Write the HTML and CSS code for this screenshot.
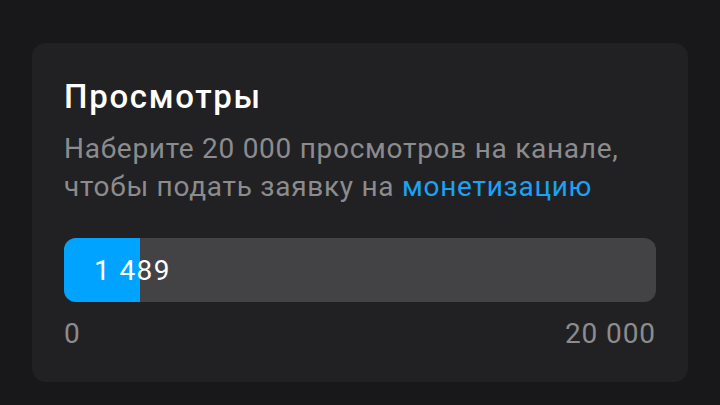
FILE: index.html
```html
<!DOCTYPE html>
<html lang="ru">
<head>
<meta charset="utf-8">
<link rel="stylesheet" href="styles.css">
</head>
<body>
<div class="page">
  <section class="card">
    <h1 class="title">Просмотры</h1>
    <p class="desc">Наберите 20 000 просмотров на канале,<br>чтобы подать заявку на <a class="link">монетизацию</a></p>
    <div class="bar">
      <div class="fill" style="width: 76px"></div>
      <span class="value">1 489</span>
    </div>
    <div class="scale"><span>0</span><span>20 000</span></div>
  </section>
</div>
</body>
</html>
```
FILE: styles.css
```css
html, body { margin: 0; padding: 0; }
body { background: #18181a; width: 720px; height: 405px; overflow: hidden; font-family: Roboto, "Noto Sans", sans-serif; }
.page { padding: 43px 32px 0 32px; }
.card { background: #212123; border-radius: 14px; padding: 34px 32px 0 32px; height: 339px; box-sizing: border-box; }
.title { margin: 0; color: #fff; font-weight: 500; font-size: 33px; line-height: 40px; letter-spacing: 1.7px; }
.desc { margin: 13px 0 0 0; color: #8c8c8e; font-size: 28px; line-height: 38px; letter-spacing: 0.72px; }
.link { color: #1aa3f5; }
.bar { position: relative; margin-top: 32px; height: 64px; background: #434345; border-radius: 12px; overflow: hidden; display: flex; align-items: center; }
.fill { position: absolute; left: 0; top: 0; bottom: 0; background: #00a3ff; }
.value { position: relative; margin-left: 30px; color: #fff; font-size: 28px; letter-spacing: 1.4px; }
.scale { display: flex; justify-content: space-between; margin-top: 13px; color: #8c8c8e; font-size: 28px; line-height: 38px; letter-spacing: 0.9px; }
```
